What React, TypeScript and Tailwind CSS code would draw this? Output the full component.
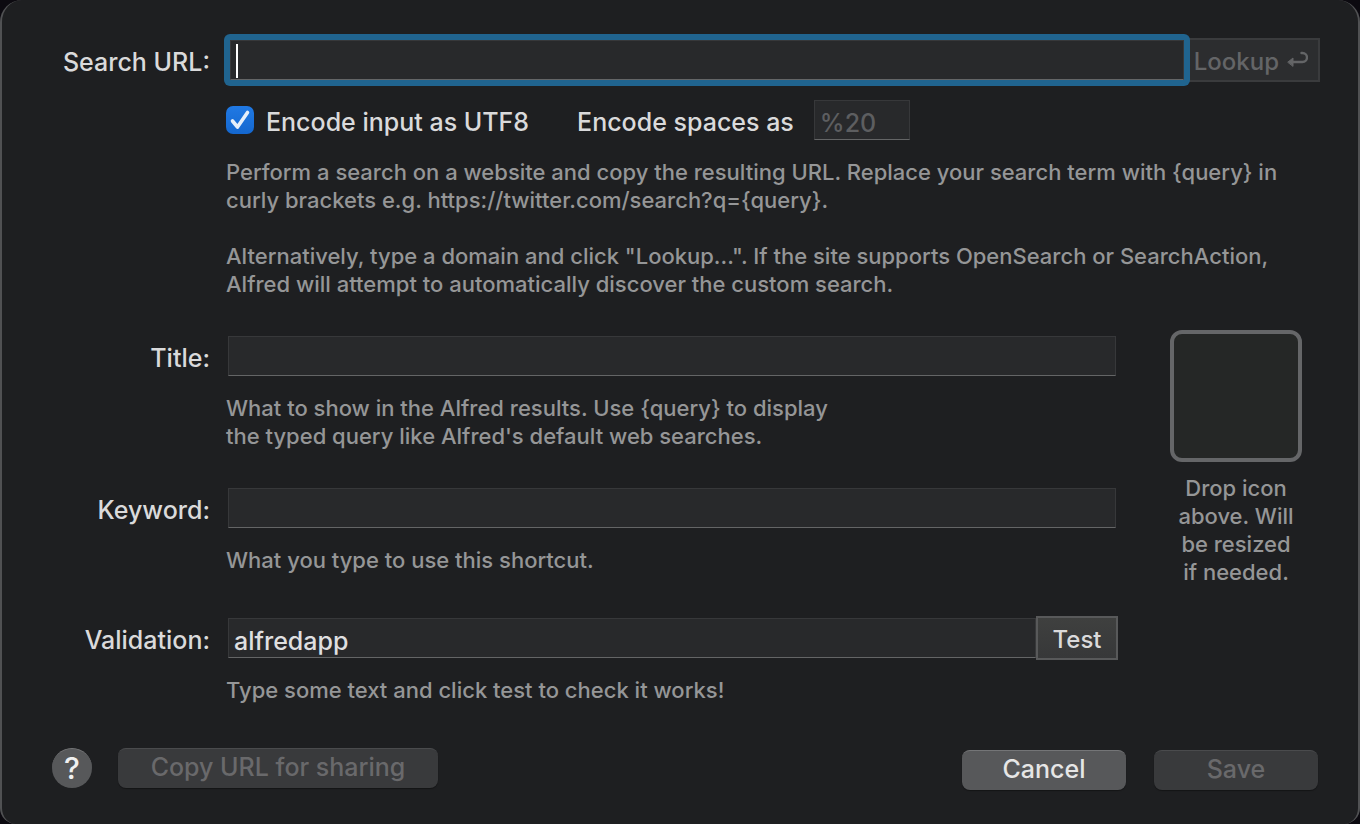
import React, { useState } from 'react';

interface FieldProps extends React.InputHTMLAttributes<HTMLInputElement> {
  className?: string;
}

const Field: React.FC<FieldProps> = ({ className = '', ...props }) => (
  <input
    type="text"
    className={`h-10 min-w-0 border border-[#37383a] border-b-[#646566] bg-[#28292b] px-[5px] pt-1.5 text-[25px] font-medium text-[#dfdfe0] outline-none placeholder:text-[#5d5e60] ${className}`}
    {...props}
  />
);

interface RowLabelProps {
  htmlFor: string;
  children: React.ReactNode;
}

const RowLabel: React.FC<RowLabelProps> = ({ htmlFor, children }) => (
  <label
    htmlFor={htmlFor}
    className="mr-[18px] w-[208px] shrink-0 pt-1 text-right text-[25px] leading-9"
  >
    {children}
  </label>
);

const Help: React.FC<{ className?: string; children: React.ReactNode }> = ({
  className = '',
  children,
}) => (
  <p className={`ml-56 text-[22px] leading-7 text-[#959697] ${className}`}>
    {children}
  </p>
);

const pushButton =
  'h-10 rounded-lg border-t pb-1 text-[25px] leading-8 shadow-[0_1px_1px_rgba(0,0,0,0.35)]';
const enabledButton = 'border-[#747577] bg-[#57585a] text-[#e6e6e6]';
const disabledButton = 'border-[#4a4b4d] bg-[#393a3c] text-[#69696b]';

const App: React.FC = () => {
  const [url, setUrl] = useState('');
  const [encode, setEncode] = useState(true);
  const [title, setTitle] = useState('');
  const [keyword, setKeyword] = useState('');
  const [validation, setValidation] = useState('alfredapp');

  return (
    <div className="min-h-screen bg-[#0c0a10] font-['Inter','Liberation_Sans',sans-serif] font-medium text-[#dadadb]">
      <form
        onSubmit={(e) => e.preventDefault()}
        className="flex min-h-screen flex-col rounded-t-[22px] rounded-b-[16px] border-x-2 border-[#505153] bg-[#1e1f21] pt-[38px] pr-[38px] pb-[34px]"
      >
        {/* Search URL */}
        <div className="flex items-center">
          <RowLabel htmlFor="search-url">Search URL:</RowLabel>
          <div className="relative -my-1.5 -mr-1.5 -ml-1 flex flex-1 rounded-md bg-[#20648f] p-1.5">
            <Field
              id="search-url"
              value={url}
              onChange={(e) => setUrl(e.target.value)}
              className="flex-1 border-[#2f7aaa] border-b-[#4a8fbb]"
            />
            {!url && (
              <span className="absolute top-2.5 left-3 h-[34px] w-0.5 bg-white" />
            )}
          </div>
          <button
            type="button"
            disabled
            className="flex h-11 w-34 items-center justify-end gap-2 border-2 border-[#3a3b3d] bg-[#2c2d2f] pr-2.5 text-[24px] text-[#646567]"
          >
            <span className="pt-1">Lookup</span>
            <svg
              viewBox="0 0 21 18"
              className="h-[18px] w-[21px]"
              fill="none"
              stroke="currentColor"
              strokeWidth="2.4"
              strokeLinecap="round"
            >
              <path d="M14.500 2H15.500a4.500 4.500 0 0 1 0 9H5" />
              <path
                d="M1 11L6 7V15Z"
                fill="currentColor"
                strokeWidth="1"
                strokeLinejoin="round"
              />
            </svg>
          </button>
        </div>

        {/* Encoding options */}
        <div className="mt-[18px] ml-56 flex items-center">
          <label className="flex items-center gap-3 text-[25px]">
            <span className="relative flex">
              <input
                type="checkbox"
                checked={encode}
                onChange={(e) => setEncode(e.target.checked)}
                className="size-7 appearance-none rounded-[7px] bg-[#39393b] checked:bg-linear-to-b checked:from-[#2079e4] checked:to-[#1467cf]"
              />
              {encode && (
                <svg
                  viewBox="0 0 28 28"
                  className="pointer-events-none absolute inset-0 size-7"
                  fill="none"
                  stroke="#e6effa"
                  strokeWidth="3.6"
                  strokeLinecap="round"
                  strokeLinejoin="round"
                >
                  <path d="M6.500 15L11.500 21L21.500 6.500" />
                </svg>
              )}
            </span>
            <span className="pt-1 leading-8">Encode input as UTF8</span>
          </label>
          <label
            htmlFor="encode-spaces"
            className="ml-12 pt-1 text-[25px] leading-8"
          >
            Encode spaces as
          </label>
          <Field
            id="encode-spaces"
            disabled
            placeholder="%20"
            className="ml-5 w-24"
          />
        </div>

        <Help className="mt-[18px]">
          Perform a search on a website and copy the resulting URL. Replace your
          search term with {'{query}'} in
          <br />
          curly brackets e.g. https://twitter.com/search?q={'{query}'}.
        </Help>
        <Help className="mt-7">
          Alternatively, type a domain and click "Lookup...". If the site
          supports OpenSearch or SearchAction,
          <br />
          Alfred will attempt to automatically discover the custom search.
        </Help>

        {/* Title and keyword, with the icon well beside them */}
        <div className="mt-8 flex">
          <div className="flex flex-1 flex-col pt-1.5">
            <div className="flex items-center">
              <RowLabel htmlFor="title">Title:</RowLabel>
              <Field
                id="title"
                value={title}
                onChange={(e) => setTitle(e.target.value)}
                className="flex-1"
              />
            </div>
            <Help className="mt-[18px]">
              What to show in the Alfred results. Use {'{query}'} to display
              <br />
              the typed query like Alfred's default web searches.
            </Help>

            <div className="mt-[38px] flex items-center">
              <RowLabel htmlFor="keyword">Keyword:</RowLabel>
              <Field
                id="keyword"
                value={keyword}
                onChange={(e) => setKeyword(e.target.value)}
                className="flex-1"
              />
            </div>
            <Help className="mt-[18px]">
              What you type to use this shortcut.
            </Help>
          </div>

          <label className="mr-[18px] ml-[54px] w-[132px] text-center text-[22px] leading-7 text-[#959697]">
            <input type="file" accept="image/*" className="sr-only" />
            <span className="mb-3 block h-[132px] rounded-xl border-4 border-[#656668] bg-[#252726]" />
            Drop icon
            <br />
            above. Will
            <br />
            be resized
            <br />
            if needed.
          </label>
        </div>

        {/* Validation */}
        <div className="mt-[30px] mr-[202px] flex items-center">
          <RowLabel htmlFor="validation">Validation:</RowLabel>
          <Field
            id="validation"
            value={validation}
            onChange={(e) => setValidation(e.target.value)}
            className="flex-1"
          />
          <button
            type="button"
            className="h-11 w-[82px] border-2 border-[#58595a] bg-linear-to-b from-[#3f403f] to-[#373839] pt-1 text-[24px]"
          >
            Test
          </button>
        </div>
        <Help className="mt-4">
          Type some text and click test to check it works!
        </Help>

        {/* Footer */}
        <div className="mt-11 mr-0.5 ml-[50px] flex items-start">
          <button
            type="button"
            aria-label="Help"
            className="flex size-10 items-center justify-center rounded-full border-t border-[#747577] bg-[#57585a] text-[30px] text-[#f0f0f0]"
          >
            ?
          </button>
          <button
            type="button"
            disabled
            className={`ml-[26px] w-80 ${pushButton} ${disabledButton}`}
          >
            Copy URL for sharing
          </button>
          <div className="mt-0.5 ml-auto flex gap-7">
            <button
              type="button"
              className={`w-41 ${pushButton} ${enabledButton}`}
            >
              Cancel
            </button>
            <button
              type="submit"
              disabled
              className={`w-41 ${pushButton} ${disabledButton}`}
            >
              Save
            </button>
          </div>
        </div>
      </form>
    </div>
  );
};

export default App;
